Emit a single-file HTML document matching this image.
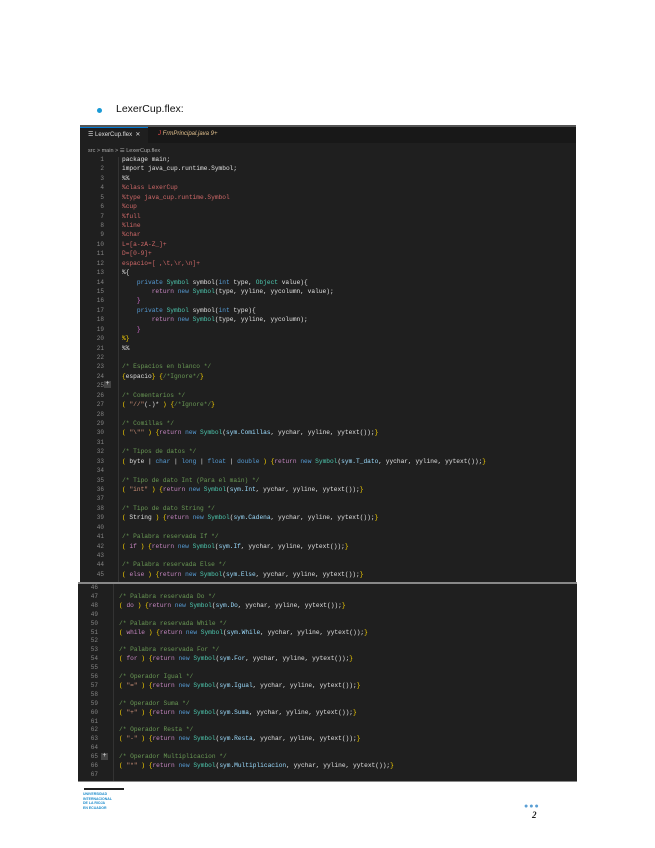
<!DOCTYPE html>
<html><head><meta charset="utf-8"><style>
body{margin:0;width:655px;height:848px;background:#fff;position:relative;overflow:hidden;font-family:"Liberation Sans",sans-serif}
.blk{position:absolute;background:#1f1f1f}
.ln{position:absolute;font-family:"Liberation Mono",monospace;font-size:6.2px;white-space:pre;color:#e0e0e0;line-height:8px}
.n{position:absolute;font-family:"Liberation Mono",monospace;font-size:6px;color:#858585;text-align:right;width:20px;line-height:8px}
.c{color:#6a9955}.k{color:#c586c0}.b{color:#569cd6}.s{color:#ce9178}.y{color:#ffd700}.t{color:#4ec9b0}.r{color:#d16969}.v{color:#9cdcfe}.p{color:#da70d6}
.plus{position:absolute;width:7px;height:7px;background:#444;color:#ddd;font-size:7px;line-height:7px;text-align:center;font-family:"Liberation Mono",monospace}
</style></head><body>
<div style="position:absolute;left:97px;top:108px;width:5px;height:5px;border-radius:50%;background:#1a9ad6"></div>
<div style="position:absolute;left:116px;top:103px;font-size:10.5px;color:#111">LexerCup.flex:</div>

<div class="blk" style="left:80px;top:125px;width:496px;height:455px;border-top:2px solid #555">
 <div style="position:absolute;left:0;top:0;width:496px;height:16px;background:#181818"></div>
 <div style="position:absolute;left:0;top:0;width:68px;height:16px;background:#1f1f1f;border-top:1px solid #0078d4"></div>
 <div style="position:absolute;left:8px;top:4px;font-size:6px;color:#ddd">☰ LexerCup.flex &nbsp;✕</div>
 <div style="position:absolute;left:78px;top:4px;font-size:6px;color:#e2c08d;font-style:italic"><span style="color:#f14c4c">J</span> FrmPrincipal.java 9+</div>
 <div style="position:absolute;left:8px;top:21px;font-size:5.5px;color:#aaa">src &gt; main &gt; ☰ LexerCup.flex</div>
 <div style="position:absolute;left:38px;top:30px;width:1px;height:425px;background:#333"></div>
</div>
<div class="blk" style="left:78px;top:582px;width:499px;height:197px;border-top:2px solid #888;border-bottom:1px solid #888">
 <div style="position:absolute;left:35px;top:0;width:1px;height:197px;background:#333"></div>
</div>
<div class="plus" style="left:104px;top:381px">+</div>
<div class="plus" style="left:101px;top:753px">+</div>

<div id="top"></div>
<script>
var top1=[
'package main;','import java_cup.runtime.Symbol;','%%','<span class="r">%class LexerCup</span>','<span class="r">%type java_cup.runtime.Symbol</span>','<span class="r">%cup</span>','<span class="r">%full</span>','<span class="r">%line</span>','<span class="r">%char</span>','<span class="r">L=[a-zA-Z_]+</span>','<span class="r">D=[0-9]+</span>','<span class="r">espacio=[ ,\\t,\\r,\\n]+</span>','%{',
'    <span class="b">private</span> <span class="t">Symbol</span> symbol(<span class="b">int</span> type, <span class="t">Object</span> value){',
'        <span class="k">return</span> <span class="b">new</span> <span class="t">Symbol</span>(type, yyline, yycolumn, value);',
'    <span class="p">}</span>',
'    <span class="b">private</span> <span class="t">Symbol</span> symbol(<span class="b">int</span> type){',
'        <span class="k">return</span> <span class="b">new</span> <span class="t">Symbol</span>(type, yyline, yycolumn);',
'    <span class="p">}</span>','<span class="y">%}</span>','%%','',
'<span class="c">/* Espacios en blanco */</span>','<span class="y">{</span>espacio<span class="y">}</span> <span class="y">{</span><span class="c">/*Ignore*/</span><span class="y">}</span>','',
'<span class="c">/* Comentarios */</span>','<span class="y">(</span> <span class="s">"//"</span>(.)* <span class="y">)</span> <span class="y">{</span><span class="c">/*Ignore*/</span><span class="y">}</span>','',
'<span class="c">/* Comillas */</span>','<span class="y">(</span> <span class="s">"\\""</span> <span class="y">)</span> <span class="y">{</span><span class="k">return</span> <span class="b">new</span> <span class="t">Symbol</span>(<span class="v">sym.Comillas</span>, yychar, yyline, yytext());<span class="y">}</span>','',
'<span class="c">/* Tipos de datos */</span>','<span class="y">(</span> byte | <span class="b">char</span> | <span class="b">long</span> | <span class="b">float</span> | <span class="b">double</span> <span class="y">)</span> <span class="y">{</span><span class="k">return</span> <span class="b">new</span> <span class="t">Symbol</span>(<span class="v">sym.T_dato</span>, yychar, yyline, yytext());<span class="y">}</span>','',
'<span class="c">/* Tipo de dato Int (Para el main) */</span>','<span class="y">(</span> <span class="s">"int"</span> <span class="y">)</span> <span class="y">{</span><span class="k">return</span> <span class="b">new</span> <span class="t">Symbol</span>(<span class="v">sym.Int</span>, yychar, yyline, yytext());<span class="y">}</span>','',
'<span class="c">/* Tipo de dato String */</span>','<span class="y">(</span> String <span class="y">)</span> <span class="y">{</span><span class="k">return</span> <span class="b">new</span> <span class="t">Symbol</span>(<span class="v">sym.Cadena</span>, yychar, yyline, yytext());<span class="y">}</span>','',
'<span class="c">/* Palabra reservada If */</span>','<span class="y">(</span> <span class="k">if</span> <span class="y">)</span> <span class="y">{</span><span class="k">return</span> <span class="b">new</span> <span class="t">Symbol</span>(<span class="v">sym.If</span>, yychar, yyline, yytext());<span class="y">}</span>','',
'<span class="c">/* Palabra reservada Else */</span>','<span class="y">(</span> <span class="k">else</span> <span class="y">)</span> <span class="y">{</span><span class="k">return</span> <span class="b">new</span> <span class="t">Symbol</span>(<span class="v">sym.Else</span>, yychar, yyline, yytext());<span class="y">}</span>'];
function R(n){return '<span class="y">{</span><span class="k">return</span> <span class="b">new</span> <span class="t">Symbol</span>(<span class="v">sym.'+n+'</span>, yychar, yyline, yytext());<span class="y">}</span>'}
var bot=['',
'<span class="c">/* Palabra reservada Do */</span>','<span class="y">(</span> <span class="k">do</span> <span class="y">)</span> '+R('Do'),'',
'<span class="c">/* Palabra reservada While */</span>','<span class="y">(</span> <span class="k">while</span> <span class="y">)</span> '+R('While'),'',
'<span class="c">/* Palabra reservada For */</span>','<span class="y">(</span> <span class="k">for</span> <span class="y">)</span> '+R('For'),'',
'<span class="c">/* Operador Igual */</span>','<span class="y">(</span> <span class="s">"="</span> <span class="y">)</span> '+R('Igual'),'',
'<span class="c">/* Operador Suma */</span>','<span class="y">(</span> <span class="s">"+"</span> <span class="y">)</span> '+R('Suma'),'',
'<span class="c">/* Operador Resta */</span>','<span class="y">(</span> <span class="s">"-"</span> <span class="y">)</span> '+R('Resta'),'',
'<span class="c">/* Operador Multiplicacion */</span>','<span class="y">(</span> <span class="s">"*"</span> <span class="y">)</span> '+R('Multiplicacion'),''];
var h='';
for(var i=0;i<top1.length;i++){var y=156+i*9.43;h+='<div class="n" style="left:84px;top:'+y+'px">'+(i+1)+'</div><div class="ln" style="left:122px;top:'+y+'px">'+top1[i]+'</div>';}
for(var j=0;j<bot.length;j++){var y2=584+j*8.9;h+='<div class="n" style="left:78px;top:'+y2+'px">'+(46+j)+'</div><div class="ln" style="left:119px;top:'+y2+'px">'+bot[j]+'</div>';}
document.getElementById('top').innerHTML=h;
</script>
<div style="position:absolute;left:84px;top:788px;width:40px;height:2px;background:#222"></div>
<div style="position:absolute;left:83px;top:792px;font-size:3.5px;line-height:4.5px;color:#1a8acb;font-weight:bold">UNIVERSIDAD<br>INTERNACIONAL<br>DE LA RIOJA<br>EN ECUADOR</div>
<div style="position:absolute;left:524px;top:803px;font-size:7px;color:#5a9fd4;letter-spacing:1px">●●●</div>
<div style="position:absolute;left:532px;top:810px;font-size:9px;font-style:italic;font-weight:bold;color:#222;font-family:'Liberation Serif',serif">2</div>
</body></html>
